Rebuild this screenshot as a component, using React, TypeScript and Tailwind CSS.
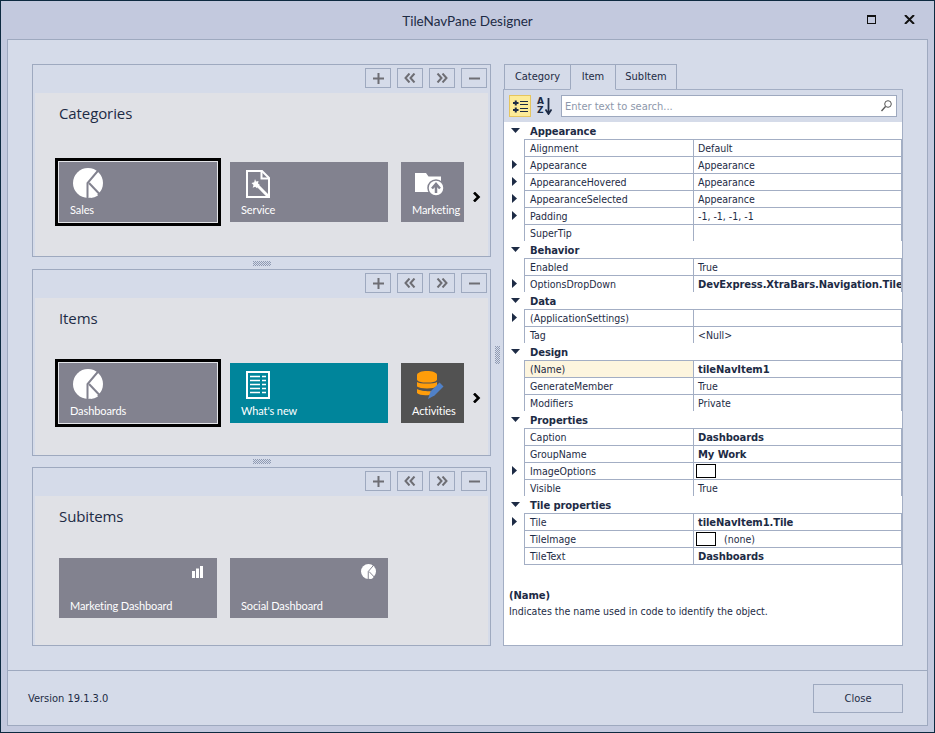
import React from "react";

const LINE = "border-[#a3aec4]";

function Pie({ size = 30, cut = "#82828f" }: { size?: number; cut?: string }) {
  return (
    <svg width={size} height={size} viewBox="0 0 30 30" className="block">
      <circle cx="15" cy="15" r="15" fill="#fff" />
      <path d="M14.500 30V15L26 1.500" fill="none" stroke={cut} strokeWidth="2" />
      <path d="M16 15L26.500 26" fill="none" stroke={cut} strokeWidth="2" />
      <path d="M17.500 30L17.500 19.500L25 27.500A15 15 0 0 1 17.500 30Z" fill="#fff" />
    </svg>
  );
}

function Wand() {
  return (
    <svg width="24" height="28" viewBox="0 0 24 28" className="block">
      <path d="M1 1H16L23 8V27H1Z" fill="none" stroke="#fff" strokeWidth="2" />
      <path d="M15.500 1V8.500H23" fill="none" stroke="#fff" strokeWidth="2" />
      <path d="M9 9l1 2.500 2.500-.5-.5 2.500 2 1.500-2.500.8-.3 2.700-2-1.700-2.500 1 .8-2.700L5.500 13l2.700-.7Z" fill="#fff" />
      <path d="M11 15L23 27" stroke="#fff" strokeWidth="3" />
    </svg>
  );
}

function Folder() {
  return (
    <svg width="29" height="24" viewBox="0 0 29 24" className="block">
      <path d="M0 1H11L13.500 4.500H26V20H0Z" fill="#fff" />
      <circle cx="21" cy="16" r="8" fill="#fff" stroke="#82828f" strokeWidth="1.500" />
      <path d="M21 21V13M17 16.500L21 12L25 16.500" fill="none" stroke="#82828f" strokeWidth="2.500" />
    </svg>
  );
}

function Doc() {
  return (
    <svg width="24" height="28" viewBox="0 0 24 28" className="block">
      <rect x="1" y="1" width="22" height="26" fill="none" stroke="#fff" strokeWidth="2" />
      <path d="M4 5.500H14M16 5.500H20M4 9.500H14M16 9.500H20M4 13.500H14M16 13.500H20M4 17.500H14M16 17.500H20M4 21.500H14M16 21.500H20" stroke="#fff" strokeWidth="1.500" />
    </svg>
  );
}

function Db() {
  return (
    <svg width="30" height="30" viewBox="0 0 30 30" className="block">
      <path d="M0 4C0 1.500 5 0 10 0S20 1.500 20 4V8.500C20 10 17 11 14 11.500H6C3 11 0 10 0 8.500Z" fill="#ff9d0a" />
      <path d="M0 11C3 13 17 13 20 11V15.500C17 18 3 18 0 15.500Z" fill="#ff9d0a" />
      <path d="M0 18C3 20 12 20.500 15 20L12.500 24C7 24.500 2 24 0 22Z" fill="#ff9d0a" />
      <path d="M13 26L15.500 18.500L24.500 9.500L28.500 13.500L19.500 22.500Z" fill="#5081c8" transform="translate(-2 2)" />
    </svg>
  );
}

function Bars() {
  return (
    <svg width="11" height="12" viewBox="0 0 11 12" className="block">
      <path d="M0 5H3V12H0ZM4 2.500H7V12H4ZM8 0H11V12H8Z" fill="#fff" />
    </svg>
  );
}

function Chevron({ dir }: { dir: "l" | "r" }) {
  return (
    <svg width="12" height="10" viewBox="0 0 12 10">
      {dir === "l" ? (
        <path d="M5.500 .5L1.500 5L5.500 9.500M10.500 .5L6.500 5L10.500 9.500" fill="none" stroke="#6e6e74" strokeWidth="2" />
      ) : (
        <path d="M1.500 .5L5.500 5L1.500 9.500M6.500 .5L10.500 5L6.500 9.500" fill="none" stroke="#6e6e74" strokeWidth="2" />
      )}
    </svg>
  );
}

function ToolBtn({ kind }: { kind: "plus" | "l" | "r" | "minus" }) {
  return (
    <div className="w-[26px] h-[20px] border border-[#9ea9bf] flex items-center justify-center">
      {kind === "plus" && (
        <svg width="11" height="11" viewBox="0 0 11 11"><path d="M5.500 0V11M0 5.500H11" stroke="#6e6e74" strokeWidth="2" /></svg>
      )}
      {kind === "minus" && (
        <svg width="11" height="11" viewBox="0 0 11 11"><path d="M0 5.500H11" stroke="#6e6e74" strokeWidth="2" /></svg>
      )}
      {(kind === "l" || kind === "r") && <Chevron dir={kind} />}
    </div>
  );
}

function Tile({
  label,
  bg = "bg-[#82828f]",
  width = "w-[158px]",
  selected,
  right,
  iconClass = "pl-[14px] pt-[6px]",
  children,
}: {
  label: string;
  bg?: string;
  width?: string;
  selected?: boolean;
  right?: boolean;
  iconClass?: string;
  children: React.ReactNode;
}) {
  return (
    <div
      className={`${width} ${bg} h-[60px] shrink-0 flex flex-col justify-between overflow-hidden ${
        selected ? "shadow-[0_0_0_1px_#e4e5e9,0_0_0_4px_#000]" : ""
      }`}
    >
      <div className={`${iconClass} ${right ? "flex justify-end" : "flex"}`}>{children}</div>
      <div className="pl-[11px] pb-[5px] text-white text-[11px] leading-[15px] tracking-[-0.1px] whitespace-nowrap font-['Lato',sans-serif]">
        {label}
      </div>
    </div>
  );
}

function Group({
  title,
  height,
  gap,
  children,
}: {
  title: string;
  height: string;
  gap: string;
  children: React.ReactNode;
}) {
  return (
    <div className={`${height} border border-[#9ea9bf] px-[2px] flex flex-col`}>
      <div className="h-[28px] shrink-0 pt-[3px] pr-[1px] flex justify-end gap-[6px]">
        <ToolBtn kind="plus" />
        <ToolBtn kind="l" />
        <ToolBtn kind="r" />
        <ToolBtn kind="minus" />
      </div>
      <div className="flex-1 bg-[#e0e1e6] pl-[24px] pt-[10px] flex flex-col items-start">
        <div className="text-[15px] leading-[20px] text-[#1d2b45] font-['Open_Sans',sans-serif] tracking-[-0.1px]">{title}</div>
        <div className={`${gap} flex gap-[13px]`}>{children}</div>
      </div>
    </div>
  );
}

function NextArrow() {
  return (
    <svg width="9" height="10" viewBox="0 0 9 10" className="shrink-0 self-center mt-[10px] -ml-[5px]">
      <path d="M2 .5L6.500 5L2 9.500" fill="none" stroke="#000" strokeWidth="2.600" />
    </svg>
  );
}

function Dots({ w, h }: { w: number; h: number }) {
  const cells: React.ReactNode[] = [];
  for (let y = 0; y < h; y++)
    for (let x = 0; x < w; x++)
      if ((x + y) % 2 === 0) cells.push(<rect key={`${x}-${y}`} x={x} y={y} width="1" height="1" fill="#8f9ab2" />);
  return (
    <svg width={w} height={h} viewBox={`0 0 ${w} ${h}`} className="block" shapeRendering="crispEdges">
      {cells}
    </svg>
  );
}

type Row =
  | { cat: string }
  | { name: string; value?: string; bold?: boolean; expand?: boolean; hl?: boolean; swatch?: boolean };

const rows: Row[] = [
  { cat: "Appearance" },
  { name: "Alignment", value: "Default" },
  { name: "Appearance", value: "Appearance", expand: true },
  { name: "AppearanceHovered", value: "Appearance", expand: true },
  { name: "AppearanceSelected", value: "Appearance", expand: true },
  { name: "Padding", value: "-1, -1, -1, -1", expand: true },
  { name: "SuperTip", value: "" },
  { cat: "Behavior" },
  { name: "Enabled", value: "True" },
  { name: "OptionsDropDown", value: "DevExpress.XtraBars.Navigation.Tile", bold: true, expand: true },
  { cat: "Data" },
  { name: "(ApplicationSettings)", value: "", expand: true },
  { name: "Tag", value: "<Null>" },
  { cat: "Design" },
  { name: "(Name)", value: "tileNavItem1", bold: true, hl: true },
  { name: "GenerateMember", value: "True" },
  { name: "Modifiers", value: "Private" },
  { cat: "Properties" },
  { name: "Caption", value: "Dashboards", bold: true },
  { name: "GroupName", value: "My Work", bold: true },
  { name: "ImageOptions", value: "", swatch: true, expand: true },
  { name: "Visible", value: "True" },
  { cat: "Tile properties" },
  { name: "Tile", value: "tileNavItem1.Tile", bold: true, expand: true },
  { name: "TileImage", value: "(none)", swatch: true },
  { name: "TileText", value: "Dashboards", bold: true },
];

const GRID = "font-['DejaVu_Sans_Condensed','DejaVu_Sans',sans-serif] text-[10.500px] text-[#1d2b45]";
const BOLD = "font-['DejaVu_Sans','Liberation_Sans',sans-serif] font-bold text-[10px] tracking-[-0.1px]";

function GridRow({ row }: { row: Row }) {
  if ("cat" in row) {
    return (
      <div className="h-[17px] flex items-center">
        <div className="w-[20px] pl-[7px] shrink-0 flex">
          <svg width="9" height="5" viewBox="0 0 9 5"><path d="M0 0H9L4.500 5Z" fill="#1d2b45" /></svg>
        </div>
        <div className={`${BOLD} pl-[6px] mt-[2px] leading-[15px]`}>{row.cat}</div>
      </div>
    );
  }
  return (
    <div className="h-[17px] flex items-stretch">
      <div className="w-[20px] shrink-0 flex items-center pl-[8px]">
        {row.expand && (
          <svg width="5" height="9" viewBox="0 0 5 9"><path d="M0 0L5 4.500L0 9Z" fill="#1d2b45" /></svg>
        )}
      </div>
      <div className="flex-1 border-l border-t border-r border-[#a3aec4] flex min-w-0">
        <div className={`w-[169px] shrink-0 pl-[5px] border-r border-[#a3aec4] leading-[16px] whitespace-nowrap ${row.hl ? "bg-[#fdf5de]" : ""}`}>
          {row.name}
        </div>
        <div className={`flex-1 min-w-0 overflow-hidden whitespace-nowrap pl-[4px] leading-[16px] flex items-center ${row.bold ? `${BOLD} pt-[2px]` : ""}`}>
          {row.swatch && <span className="w-[20px] h-[14px] -ml-[2px] border border-black bg-white shrink-0" />}
          {row.swatch && row.value ? <span className="ml-[8px]">{row.value}</span> : row.value}
        </div>
      </div>
    </div>
  );
}

function Tab({ label, active, width }: { label: string; active?: boolean; width: string }) {
  return (
    <div
      className={`${width} h-[26px] -mb-[1px] border border-[#9ea9bf] flex items-center justify-center text-[11px] text-[#1d2b45] font-['DejaVu_Sans_Condensed','DejaVu_Sans',sans-serif] -mr-[1px] bg-[#d5dbe9] ${
        active ? "border-b-[#d5dbe9] z-10" : ""
      }`}
    >
      {label}
    </div>
  );
}

function PropertyPanel() {
  return (
    <div className="w-[400px] h-[582px] flex flex-col">
      <div className="flex h-[25px] pl-[1px] shrink-0">
        <Tab label="Category" width="w-[67px]" />
        <Tab label="Item" width="w-[46px]" active />
        <Tab label="SubItem" width="w-[62px]" />
      </div>
      <div className={`flex-1 border ${LINE} bg-white flex flex-col`}>
        <div className="h-[32px] shrink-0 bg-[#d5dbe9] flex items-center pl-[5px] pr-[5px]">
          <div className="w-[22px] h-[22px] bg-[#fdeb98] border border-[#e6c55e] flex items-center justify-center">
            <svg width="15" height="13" viewBox="0 0 15 13">
              <path d="M0 3H5.500M2.750 .5V5.500M0 10H5.500M2.750 7.500V12.500" stroke="#1d2b45" strokeWidth="2" />
              <path d="M7 1.500H15M7 4.500H15M7 8.500H15M7 11.500H15" stroke="#1d2b45" strokeWidth="1" />
            </svg>
          </div>
          <div className="w-[30px] h-[22px] flex items-center pl-[6px] gap-[1px]">
            <div className="flex flex-col text-[9px] leading-[9px] font-bold text-[#1d2b45] font-['DejaVu_Sans',sans-serif]">
              <span>A</span>
              <span>Z</span>
            </div>
            <svg width="7" height="17" viewBox="0 0 7 17"><path d="M3.500 0V15M.5 11.500L3.500 16L6.500 11.500" fill="none" stroke="#1d2b45" strokeWidth="1.800" /></svg>
          </div>
          <div className="flex-1 h-[22px] border border-[#9ea9bf] bg-white flex items-center justify-between pl-[3px] pr-[4px] text-[11px] text-[#8d97ab] font-['DejaVu_Sans_Condensed','DejaVu_Sans',sans-serif]">
            <span className="pt-[2px]">Enter text to search...</span>
            <svg width="11" height="12" viewBox="0 0 11 12"><circle cx="7" cy="4" r="3.300" fill="none" stroke="#555" strokeWidth="1" /><path d="M4.500 6.500L.5 11" stroke="#555" strokeWidth="1.300" /></svg>
          </div>
        </div>
        <div className={GRID}>
          {rows.map((r, i) => (
            <GridRow key={i} row={r} />
          ))}
          <div className="ml-[20px] border-t border-[#a3aec4]" />
        </div>
        <div className={`${GRID} pl-[5px] pt-[23px]`}>
          <div className={`${BOLD} leading-[15px]`}>(Name)</div>
          <div className="leading-[16px]">Indicates the name used in code to identify the object.</div>
        </div>
      </div>
    </div>
  );
}

export default function App() {
  return (
    <div className="w-[935px] h-[733px] bg-[#c3c9de] border border-[#0d2a40] flex flex-col overflow-hidden">
      <div className="h-[38px] shrink-0 relative flex items-center justify-center pt-[3px] text-[13.500px] text-[#1d2b45] font-['Lato',sans-serif]">
        TileNavPane Designer
        <div className="absolute right-[19px] top-[14px] flex items-center gap-[28px]">
          <div className="w-[9px] h-[9px] border border-t-[2px] border-[#111]" />
          <svg width="11" height="9" viewBox="0 0 11 9"><path d="M1 0L10 9M10 0L1 9" stroke="#111" strokeWidth="2" /></svg>
        </div>
      </div>
      <div className="mx-[6px] h-[687px] shrink-0 border border-[#9ea9bf] bg-[#d5dbe9] flex flex-col">
        <div className="h-[631px] shrink-0 border-b border-[#9ea9bf] pl-[24px] pt-[24px] flex">
          <div className="w-[459px] flex flex-col">
            <Group title="Categories" height="h-[193px] shrink-0" gap="mt-[39px]">
              <Tile label="Sales" selected><Pie /></Tile>
              <Tile label="Service" iconClass="pl-[16px] pt-[8px]"><Wand /></Tile>
              <Tile label="Marketing" width="w-[63px]" iconClass="pl-[14px] pt-[10px]"><Folder /></Tile>
              <NextArrow />
            </Group>
            <div className="h-[12px] shrink-0 flex items-center justify-center"><Dots w={18} h={5} /></div>
            <Group title="Items" height="h-[187px] shrink-0" gap="mt-[35px]">
              <Tile label="Dashboards" selected><Pie /></Tile>
              <Tile label="What's new" bg="bg-[#00859b]" iconClass="pl-[16px] pt-[8px]"><Doc /></Tile>
              <Tile label="Activities" bg="bg-[#525252]" width="w-[63px]" iconClass="pl-[16px] pt-[8px]"><Db /></Tile>
              <NextArrow />
            </Group>
            <div className="h-[11px] shrink-0 flex items-center justify-center"><Dots w={18} h={5} /></div>
            <Group title="Subitems" height="h-[179px] shrink-0" gap="mt-[32px]">
              <Tile label="Marketing Dashboard" right iconClass="pr-[14px] pt-[8px]"><Bars /></Tile>
              <Tile label="Social Dashboard" right iconClass="pr-[12px] pt-[6px]"><Pie size={15} /></Tile>
            </Group>
          </div>
          <div className="w-[12px] shrink-0 flex items-center justify-center self-start h-[582px]"><Dots w={5} h={18} /></div>
          <PropertyPanel />
        </div>
        <div className="flex-1 flex items-center justify-between pl-[20px] pr-[24px] text-[11px] text-[#1d2b45] font-['DejaVu_Sans_Condensed','DejaVu_Sans',sans-serif]">
          <span className="pt-[3px]">Version 19.1.3.0</span>
          <div className="w-[90px] h-[29px] pt-[3px] border border-[#9ea9bf] flex items-center justify-center">Close</div>
        </div>
      </div>
    </div>
  );
}
